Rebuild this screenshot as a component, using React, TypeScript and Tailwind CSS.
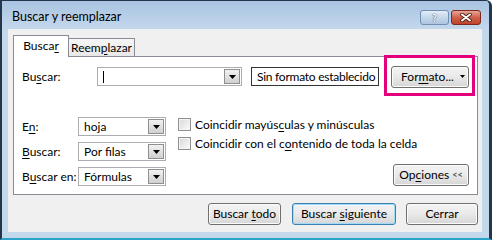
import React from 'react';

const Arrow = () => (
  <svg width="7" height="4" viewBox="0 0 7 4" className="block">
    <path d="M0 0h7L3.5 4z" fill="#000" />
  </svg>
);

const Combo = ({ value, w }: { value: React.ReactNode; w: string }) => (
  <div className={`${w} h-[19px] flex bg-white border border-[#abadb3]`}>
    <div className="flex-1 flex items-center pl-[5px] leading-none">{value}</div>
    <div className="w-[16px] m-px flex items-center justify-center border border-[#8e8f8f] bg-linear-to-b from-[#f2f2f2] to-[#d0d0d0]">
      <Arrow />
    </div>
  </div>
);

const Checkbox = ({ children }: { children: React.ReactNode }) => (
  <div className="flex items-center h-[13px]">
    <div className="w-[13px] h-[13px] border border-[#8f8f8f] bg-linear-to-br from-[#d8d8d8] to-[#fbfbfb] shadow-[inset_0_0_0_1px_#f4f4f4]" />
    <span className="ml-[4px] leading-none">{children}</span>
  </div>
);

const Button = ({ children, w, focused }: { children: React.ReactNode; w: string; focused?: boolean }) => (
  <div
    className={`${w} h-[22px] flex items-center justify-center rounded-[3px] border bg-linear-to-b from-[#f4f4f4] via-[#e9e9e9] to-[#d6d6d6] ${
      focused ? 'border-[#3c7fb1] shadow-[inset_0_0_0_1px_#9fdbf6]' : 'border-[#707070] shadow-[inset_0_0_0_1px_#fbfbfb]'
    }`}
  >
    {children}
  </div>
);

export default function App() {
  return (
    <div className="w-[492px] h-[240px] flex flex-col overflow-hidden whitespace-nowrap bg-[#c4d8ec] border-l-2 border-t border-r-[3px] border-b-2 border-l-[#23364c] border-t-[#23364c] border-r-[#23364c] border-b-[#2ba3c8] rounded-tr-[6px] font-['Lato',sans-serif] text-[12px] text-black">
      {/* title bar */}
      <div className="h-[28px] flex items-start pl-[10px] pr-[8px] bg-linear-to-b from-[#a9c3e1] to-[#c4d8ec]">
        <span className="pt-[8px] leading-[16px] text-[12.5px]">Buscar y reemplazar</span>
        <div className="ml-auto mt-[9px] flex gap-[2px]">
          <div className="w-[29px] h-[15px] rounded-[3px] border border-[#6f8fb5] bg-linear-to-b from-[#e3edf7] via-[#c5d7ec] to-[#aec5e0] flex items-center justify-center">
            <span className="font-bold text-[11px] leading-none text-white [text-shadow:0_0_1px_#35506e,0_0_1px_#35506e]">?</span>
          </div>
          <div className="w-[30px] h-[15px] rounded-[3px] border border-[#7a2a1e] bg-linear-to-b from-[#e8a597] via-[#d0604a] to-[#c2412a] flex items-center justify-center">
            <svg width="12" height="9" viewBox="0 0 12 9">
              <path d="M2 1.5l8 6M10 1.5l-8 6" stroke="#4a1a12" strokeWidth="3.6" strokeLinecap="round" />
              <path d="M2 1.5l8 6M10 1.5l-8 6" stroke="#fff" strokeWidth="2" strokeLinecap="round" />
            </svg>
          </div>
        </div>
      </div>

      {/* client */}
      <div className="flex-1 ml-[6px] mr-[7px] mb-[6px] flex flex-col bg-[#f0f0f0] pt-[6px] pl-[5px] pr-[4px]">
        {/* tabs */}
        <div className="flex items-end h-[21px]">
          <div className="relative z-10 w-[56px] h-[22px] -mb-px bg-white border border-b-0 border-[#898c95] flex items-center justify-center pb-[1px]">
            Busca<u className="underline-offset-2">r</u>
          </div>
          <div className="w-[66px] h-[18px] border border-l-0 border-b-0 border-[#898c95] bg-linear-to-b from-[#f6f6f6] to-[#e8e8e8] flex items-center justify-center">
            Reem<u className="underline-offset-2">p</u>lazar
          </div>
        </div>

        {/* panel */}
        <div className="h-[139px] bg-white border border-[#898c95] flex flex-col pl-[8px] pr-[8px] pt-[10px]">
          <div className="flex items-center h-[19px]">
            <span className="w-[75px]">
              Bu<u className="underline-offset-2">s</u>car:
            </span>
            <Combo w="w-[145px]" value={<span className="w-px h-[12px] bg-black" />} />
            <div className="ml-[9px] w-[128px] h-[19px] border border-[#333] flex items-center pl-[5px] tracking-[-0.25px]">
              Sin formato establecido
            </div>
            <div className="relative ml-[12px]">
              <Button w="w-[78px]">
                <span className="ml-[6px]">
                  For<u className="underline-offset-2">m</u>ato...
                </span>
                <span className="ml-[6px]">
                  <svg width="5" height="3" viewBox="0 0 5 3" className="block">
                    <path d="M0 0h5L2.5 3z" fill="#000" />
                  </svg>
                </span>
              </Button>
              <div className="absolute left-[-7px] right-[-6px] top-[-11px] bottom-[-8px] border-[3px] border-[#e4007c]" />
            </div>
          </div>

          <div className="flex items-start mt-[31px]">
            <div className="flex flex-col gap-[6px]">
              {[
                ['E', 'n', ':', 'hoja'],
                ['', 'B', 'uscar:', 'Por filas'],
                ['B', 'u', 'scar en:', 'Fórmulas'],
              ].map(([a, u, b, v]) => (
                <div key={v} className="flex items-center h-[19px]">
                  <span className="w-[56px]">
                    {a}
                    <u className="underline-offset-2">{u}</u>
                    {b}
                  </span>
                  <Combo w="w-[88px]" value={v} />
                </div>
              ))}
            </div>
            <div className="flex-1 ml-[12px] mt-px flex flex-col">
              <div className="flex flex-col gap-[6px]">
                <Checkbox>
                  Coincidir mayús<u className="underline-offset-2">c</u>ulas y minúsculas
                </Checkbox>
                <Checkbox>
                  Coincidir con el c<u className="underline-offset-2">o</u>ntenido de toda la celda
                </Checkbox>
              </div>
              <div className="self-end mt-[14px]">
                <Button w="w-[76px]">
                  Op<u className="underline-offset-2">c</u>iones
                  <span className="ml-[3px] text-[9px] font-bold text-[#555]">&lt;&lt;</span>
                </Button>
              </div>
            </div>
          </div>
        </div>

        {/* bottom buttons */}
        <div className="flex justify-end mt-[8px]">
          <Button w="w-[73px]">
            Buscar <u className="underline-offset-2 ml-[3px]">t</u>odo
          </Button>
          <div className="ml-[11px]">
            <Button w="w-[104px]" focused>
              Buscar <u className="underline-offset-2 ml-[3px]">s</u>iguiente
            </Button>
          </div>
          <div className="ml-[10px]">
            <Button w="w-[72px]">Cerrar</Button>
          </div>
        </div>
      </div>
    </div>
  );
}
